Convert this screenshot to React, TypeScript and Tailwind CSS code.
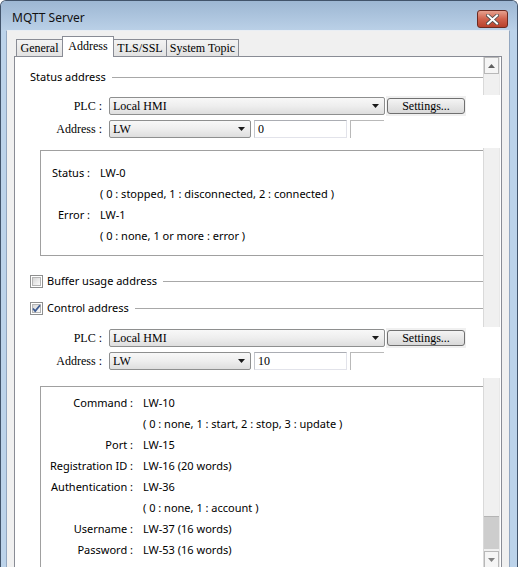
import React from 'react';

const sans = "font-['Noto_Sans',sans-serif] text-[11px] text-black";
const serif = "font-['Liberation_Serif',serif] text-[12px] text-black";

const DropArrow = () => (
    <svg width="7" height="4" viewBox="0 0 7 4" className="shrink-0">
        <path d="M0 0h7L3.5 4z" fill="#1a1a1a" />
    </svg>
);

function Combo({ value, width }: { value: string; width: string }) {
    return (
        <div
            className={`${width} h-[18px] flex items-center justify-between rounded-[2px] border border-[#8e8f8f] bg-linear-to-b from-[#f8f8f8] via-[#eeeeee] to-[#dedede] pl-[3px] pr-[5px] ${serif}`}
        >
            <span className="leading-none">{value}</span>
            <DropArrow />
        </div>
    );
}

// PLC + Address rows; this child panel paints over the scrollbar in the original
function PlcBlock({ address, bottom }: { address: string; bottom: string }) {
    return (
        <div className={`relative z-10 bg-white pt-[2px] ${bottom}`}>
            <div className="flex items-center h-[18px]">
                <span className={`w-[87px] text-right ${serif}`}>PLC :</span>
                <div className="ml-[7px]">
                    <Combo value="Local HMI" width="w-[276px]" />
                </div>
                <div className="ml-[1px] w-[80px] h-[20px] bg-[#f0f0f0] flex items-center justify-center">
                    <div
                        className={`w-[78px] h-[16px] rounded-[3px] border border-[#707070] bg-linear-to-b from-[#f4f4f4] to-[#d9d9d9] flex items-center justify-center leading-none ${serif}`}
                    >
                        Settings...
                    </div>
                </div>
            </div>
            <div className="flex items-center h-[18px] mt-[5px]">
                <span className={`w-[87px] text-right ${serif}`}>Address :</span>
                <div className="ml-[7px]">
                    <Combo value="LW" width="w-[142px]" />
                </div>
                <div
                    className={`ml-[3px] w-[93px] h-[18px] bg-white border border-[#e2e3ea] border-t-[#abadb3] border-l-[#c5c7cd] pl-[3px] flex items-center leading-none ${serif}`}
                >
                    {address}
                </div>
                <div className="ml-[3px] w-[34px] h-[18px] border-l border-t border-[#b9b9b9]" />
            </div>
        </div>
    );
}

function GroupHeader({ children }: { children: React.ReactNode }) {
    return (
        <div className="flex items-center h-[16px] pl-[15px] pr-[18px]">
            {children}
            <div className="flex-1 h-px bg-[#a8a8a8] ml-[6px]" />
        </div>
    );
}

function CheckBox({ checked }: { checked?: boolean }) {
    return (
        <div className="relative w-[13px] h-[13px] border border-[#8e8f8f] bg-white p-px">
            <div className="w-full h-full border border-[#b5b5b5] bg-linear-to-br from-[#d6d6d6] to-[#fbfbfb]" />
            {checked && (
                <svg width="13" height="13" viewBox="0 0 13 13" className="absolute -left-px -top-px">
                    <path d="M3 6.5L5.2 9L10 3.2" stroke="#3d5b92" strokeWidth="1.8" fill="none" />
                </svg>
            )}
        </div>
    );
}

type Row = [string, string];

function InfoBox({ rows, labelWidth, top, bottom }: { rows: Row[]; labelWidth: string; top: string; bottom: string }) {
    return (
        <div className={`ml-[25px] mr-[17px] border border-[#a0a0a0] ${top} ${bottom}`}>
            {rows.map(([label, value], i) => (
                <div key={i} className={`flex items-center h-[21px] whitespace-nowrap ${sans}`}>
                    <span className={`${labelWidth} text-right`}>{label}</span>
                    <span className="ml-[10px]">{value}</span>
                </div>
            ))}
        </div>
    );
}

const statusRows: Row[] = [
    ['Status :', 'LW-0'],
    ['', '( 0 : stopped, 1 : disconnected, 2 : connected )'],
    ['Error :', 'LW-1'],
    ['', '( 0 : none, 1 or more : error )'],
];

const controlRows: Row[] = [
    ['Command :', 'LW-10'],
    ['', '( 0 : none, 1 : start, 2 : stop, 3 : update )'],
    ['Port :', 'LW-15'],
    ['Registration ID :', 'LW-16 (20 words)'],
    ['Authentication :', 'LW-36'],
    ['', '( 0 : none, 1 : account )'],
    ['Username :', 'LW-37 (16 words)'],
    ['Password :', 'LW-53 (16 words)'],
    ['Error message :', 'LW-69 (34 words)'],
];

function ScrollBar() {
    return (
        <div className="absolute right-[1px] top-0 bottom-[1px] w-[17px] flex flex-col bg-[#f0f0f0] border-l border-[#d9d9d9] border-r border-r-[#e8e8e8]">
            <div className="h-[17px] border border-[#b8b8b8] bg-[#f5f5f5] flex items-center justify-center">
                <svg width="7" height="4" viewBox="0 0 7 4">
                    <path d="M3.5 0L7 4H0z" fill="#606060" />
                </svg>
            </div>
            <div className="flex-1" />
            <div className="h-[33px] bg-[#cdcdcd] border-t border-[#b4b4b4]" />
            <div className="h-[2px]" />
            <div className="h-[17px] border border-[#b8b8b8] bg-[#f5f5f5] flex items-center justify-center">
                <svg width="7" height="4" viewBox="0 0 7 4">
                    <path d="M0 0h7L3.5 4z" fill="#808080" />
                </svg>
            </div>
        </div>
    );
}

export default function App() {
    return (
        <div className="w-[518px] h-[567px] overflow-hidden flex flex-col bg-[#bcd3ea] border-l border-t border-r border-[#42546b] rounded-tl-[6px] rounded-tr-[6px]">
            {/* Title bar */}
            <div className="h-[29px] shrink-0 flex items-start bg-linear-to-b from-[#9db7d3] to-[#bad0e7]">
                <span className={`ml-[11px] mt-[8px] font-['Noto_Sans',sans-serif] text-[12px] text-[#111]`}>MQTT Server</span>
                <div className="ml-auto mt-[9px] mr-[9px] w-[31px] h-[18px] rounded-[3px] border border-[#6b2a21] bg-linear-to-b from-[#e6a18f] via-[#d0624d] to-[#b8412c] flex items-center justify-center">
                    <svg width="13" height="11" viewBox="0 0 13 11">
                        <path d="M2 1.5L11 9.5M11 1.5L2 9.5" stroke="#4a4a4a" strokeWidth="3.6" strokeLinecap="square" />
                        <path d="M2 1.5L11 9.5M11 1.5L2 9.5" stroke="#ffffff" strokeWidth="2" strokeLinecap="square" />
                    </svg>
                </div>
            </div>

            {/* Client area */}
            <div className="ml-[5px] mr-[7px] flex-1 border-l border-t border-r border-[#93a7c0] border-t-[#e9eef4] bg-[#f0f0f0] flex flex-col">
                {/* Tabs */}
                <div className="h-[25px] shrink-0 flex items-end pl-[9px]">
                    <div className={`w-[46px] h-[17px] border-l border-t border-[#898c95] bg-linear-to-b from-[#f3f3f3] to-[#e2e2e2] flex items-center justify-center ${serif}`}>
                        General
                    </div>
                    <div className={`relative z-10 -mb-px w-[52px] h-[21px] border-l border-t border-r border-[#898c95] bg-white flex items-center justify-center pb-[2px] ${serif}`}>
                        Address
                    </div>
                    <div className={`w-[53px] h-[17px] border-t border-r border-[#898c95] bg-linear-to-b from-[#f3f3f3] to-[#e2e2e2] flex items-center justify-center ${serif}`}>
                        TLS/SSL
                    </div>
                    <div className={`w-[72px] h-[17px] border-t border-r border-[#898c95] bg-linear-to-b from-[#f3f3f3] to-[#e2e2e2] flex items-center justify-center ${serif}`}>
                        System Topic
                    </div>
                </div>

                {/* Tab panel */}
                <div className="relative ml-[7px] mr-[7px] h-[514px] shrink-0 border border-[#898c95] bg-white overflow-hidden">
                    <div className="pt-[12px]">
                        <GroupHeader>
                            <span className={sans}>Status address</span>
                        </GroupHeader>

                        <div className="mt-[10px]">
                            <PlcBlock address="0" bottom="pb-[10px]" />
                        </div>

                        <InfoBox rows={statusRows} labelWidth="w-[49px]" top="mt-[2px] pt-[12px]" bottom="pb-[8px]" />

                        <div className="mt-[17px]">
                            <GroupHeader>
                                <CheckBox />
                                <span className={`ml-[4px] ${sans}`}>Buffer usage address</span>
                            </GroupHeader>
                        </div>
                        <div className="mt-[11px]">
                            <GroupHeader>
                                <CheckBox checked />
                                <span className={`ml-[4px] ${sans}`}>Control address</span>
                            </GroupHeader>
                        </div>

                        <div className="mt-[11px]">
                            <PlcBlock address="10" bottom="pb-[8px]" />
                        </div>

                        <InfoBox rows={controlRows} labelWidth="w-[92px]" top="mt-[8px] pt-[6px]" bottom="pb-[8px]" />
                    </div>

                    <ScrollBar />
                </div>
            </div>
        </div>
    );
}
